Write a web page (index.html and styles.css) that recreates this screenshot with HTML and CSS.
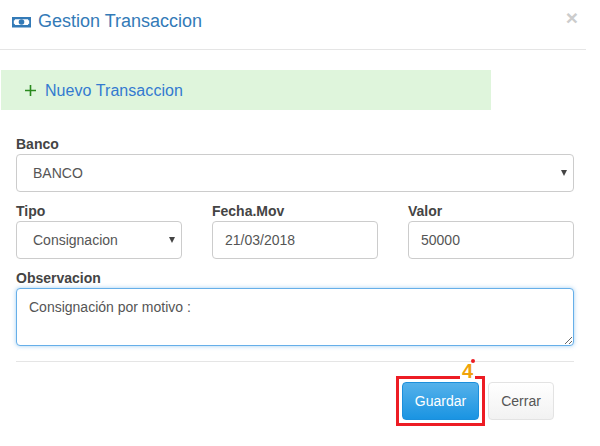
FILE: index.html
```html
<!DOCTYPE html>
<html lang="en">
<head>
  <meta charset="UTF-8">
  <meta name="viewport" content="width=device-width, initial-scale=1.0">
  <title>Gestion Transaccion</title>
  <link rel="stylesheet" href="styles.css">
</head>
<body>
  <div class="modal">
    <!-- Header -->
    <div class="modal-header">
      <h4 class="modal-title">
        <svg class="money-icon" width="19" height="12" viewBox="0 0 19 12">
          <path fill="#337ab7" fill-rule="evenodd" d="M0 1h19v10.500H0zM3 3.200q0 1.200-1.200 1.200v3.400q1.200 0 1.200 1.200h13q0-1.200 1.200-1.200V4.400q-1.200 0-1.200-1.200z"/>
          <circle cx="9.500" cy="6" r="2.800" fill="#337ab7"/>
        </svg>
        Gestion Transaccion
      </h4>
      <span class="close">&times;</span>
    </div>

    <!-- Nuevo banner -->
    <div class="banner">
      <svg class="plus" width="11" height="11" viewBox="0 0 11 11"><path fill="#2a8a1e" d="M4.700 0h1.600v4.700H11v1.600H6.300V11H4.700V6.300H0V4.700h4.700z"/></svg>
      <span class="banner-text">Nuevo Transaccion</span>
    </div>

    <!-- Form -->
    <form class="form">
      <div class="form-group">
        <label for="banco">Banco</label>
        <div class="select-wrap"><select id="banco" class="control"><option>BANCO</option></select></div>
      </div>
      <div class="form-row">
        <div class="form-group">
          <label for="tipo">Tipo</label>
          <div class="select-wrap"><select id="tipo" class="control"><option>Consignacion</option></select></div>
        </div>
        <div class="form-group">
          <label for="fecha">Fecha.Mov</label>
          <input id="fecha" class="control" type="text" value="21/03/2018">
        </div>
        <div class="form-group">
          <label for="valor">Valor</label>
          <input id="valor" class="control" type="text" value="50000">
        </div>
      </div>
      <div class="form-group">
        <label for="obs">Observacion</label>
        <textarea id="obs" class="control focused">Consignación por motivo :</textarea>
      </div>
      <div class="form-footer">
        <div class="highlight">
          <span class="step">4</span>
          <span class="step-dot"></span>
          <button type="button" class="btn btn-primary">Guardar</button>
        </div>
        <button type="button" class="btn btn-default">Cerrar</button>
      </div>
    </form>
  </div>
</body>
</html>
```

FILE: styles.css
```css
/* Global styling */
body { margin: 0; background-color: #fff; font-family: "Liberation Sans", Arial, sans-serif; font-size: 14px; color: #555; }
.modal { width: 586px; height: 446px; overflow: hidden; }

/* Header */
.modal-header { display: flex; justify-content: space-between; height: 49px; border-bottom: 1px solid #e5e5e5; }
.modal-title { margin: 0; padding: 11px 0 0 12px; font-size: 18px; font-weight: normal; line-height: 20px; color: #337ab7; }
.money-icon { margin: 0 2px 0 0; vertical-align: -1px; }
.close { padding: 7px 8px 0 0; font-size: 21px; line-height: 21px; font-weight: bold; color: #ccc; }

/* Banner */
.banner { display: flex; align-items: center; gap: 9px; width: 466px; height: 40px; margin: 20px 0 0 1px; padding-left: 24px; background-color: #dff5dc; font-size: 16px; }
.banner-text { padding-top: 2px; color: #337ad0; letter-spacing: 0.06px; }

/* Form */
.form { padding: 0 12px 0 16px; margin-top: 26px; }
.form-group { margin-bottom: 11px; }
.form-group label { display: block; font-weight: bold; line-height: 17px; height: 18px; color: #444; }
.form-row { display: grid; grid-template-columns: repeat(3, 166px); gap: 30px; }
.control { display: block; width: 100%; height: 38px; box-sizing: border-box; padding: 0 12px; border: 1px solid #ccc; border-radius: 4px; background-color: #fff; font: 14px "Liberation Sans", Arial, sans-serif; color: #555; }
select.control { appearance: none; padding-left: 16px; }
textarea.control { height: 58px; padding: 10px 12px; }
.focused { border-color: #66afe9; box-shadow: 0 0 4px rgba(102, 175, 233, 0.6); outline: none; }
.select-wrap { position: relative; }
.select-wrap::after { content: ""; position: absolute; right: 7px; top: 16px; border-style: solid; border-width: 6px 3.5px 0; border-color: #444 transparent transparent; }

/* Footer */
.form-footer { display: flex; justify-content: flex-end; align-items: center; gap: 9px; margin-top: 15px; padding: 20px 20px 0 0; border-top: 1px solid #e5e5e5; }
.btn { height: 38px; border-radius: 4px; font: 14px "Liberation Sans", Arial, sans-serif; }
.btn-primary { width: 77px; border: 1px solid #1b8fdc; background: linear-gradient(#55b1ea, #1a94e2); color: #fff; }
.btn-default { width: 66px; border: 1px solid #e3e3e3; background: linear-gradient(#fff, #f2f2f2); color: #555; }

/* Red annotation around Guardar */
.highlight { position: relative; display: flex; }
.highlight::before { content: ""; position: absolute; left: -6px; top: -6px; width: 83px; height: 44px; border: 3px solid #ed1c24; }
.step { position: absolute; left: 58px; top: -19px; padding: 0 2px; background-color: #fff; color: #f0a30a; font-size: 20px; font-weight: bold; line-height: 17px; }
.step-dot { position: absolute; left: 69px; top: -23px; width: 4px; height: 4px; border-radius: 50%; background-color: #ed1c24; }
```
